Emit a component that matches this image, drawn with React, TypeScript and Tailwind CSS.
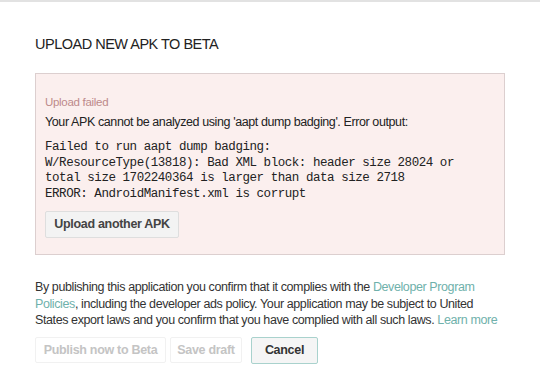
export default function App() {
  return (
    <div className="w-[540px] h-[389px] bg-white border-t-2 border-[#e2e2e2] font-['Liberation_Sans',Arial,sans-serif] text-[12.5px] tracking-[-0.4px] text-[#333]">
      <div className="px-[35px] pt-[32px]">
        <h1 className="text-[14.5px] leading-[20px] text-[#222] tracking-[-0.5px]">UPLOAD NEW APK TO BETA</h1>

        {/* Error box */}
        <div className="mt-[19px] w-[470px] h-[182px] bg-[#fbefee] border border-[#dccfcf] px-[9px] pt-[20px]">
          <div className="text-[11.5px] leading-[16px] tracking-[-0.3px] text-[#bd8a8a]">Upload failed</div>
          <div className="mt-[4px] leading-[16px] text-[#222]">
            Your APK cannot be analyzed using 'aapt dump badging'. Error output:
          </div>
          <pre className="mt-[10px] font-['Liberation_Mono','Courier_New',monospace] text-[12.5px] tracking-[-0.45px] leading-[15.7px] text-[#222] whitespace-pre">
{`Failed to run aapt dump badging:
W/ResourceType(13818): Bad XML block: header size 28024 or
total size 1702240364 is larger than data size 2718
ERROR: AndroidManifest.xml is corrupt`}
          </pre>
          <button className="mt-[8px] h-[27px] w-[134px] bg-[#f3f3f3] border border-[#dedede] rounded-[2px] font-bold text-[#444] tracking-[-0.3px]">
            Upload another APK
          </button>
        </div>

        <p className="mt-[24px] w-[470px] leading-[16.5px] text-[#333]">
          By publishing this application you confirm that it complies with the{' '}
          <span className="text-[#6fb1ab]">Developer Program Policies</span>, including the developer ads policy. Your
          application may be subject to United States export laws and you confirm that you have complied with all such
          laws. <span className="text-[#6fb1ab]">Learn more</span>
        </p>

        <div className="mt-[8px] flex items-center">
          <button className="h-[26px] w-[131px] border border-[#f1f1f1] rounded-[2px] bg-white font-bold text-[#c4c4c4] tracking-[-0.3px]">
            Publish now to Beta
          </button>
          <button className="ml-[4px] h-[26px] w-[72px] border border-[#f1f1f1] rounded-[2px] bg-white font-bold text-[#c4c4c4] tracking-[-0.3px]">
            Save draft
          </button>
          <button className="ml-[9px] h-[27px] w-[67px] border border-[#a9d2cd] rounded-[2px] bg-[#f5f5f5] font-bold text-[#333] tracking-[-0.3px]">
            Cancel
          </button>
        </div>
      </div>
    </div>
  )
}
